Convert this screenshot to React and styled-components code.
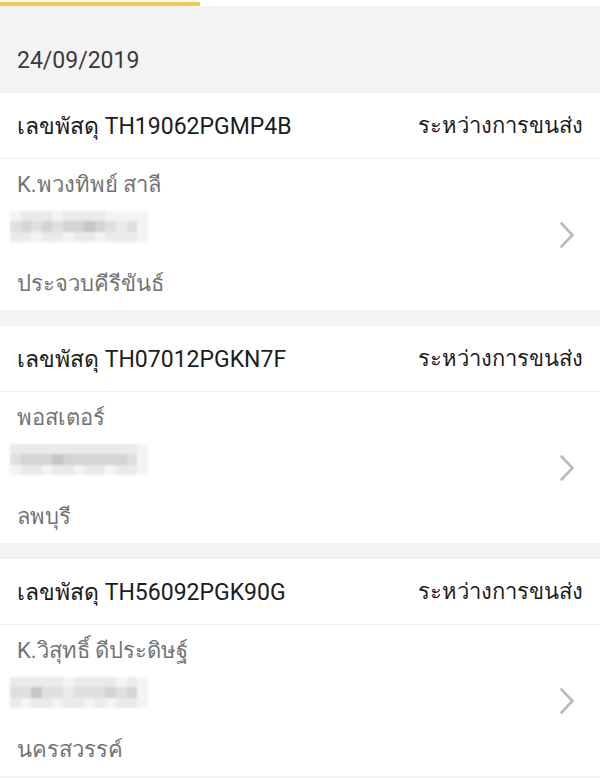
import styled, { createGlobalStyle } from "styled-components";

const GlobalStyle = createGlobalStyle`
  body {
    margin: 0;
    background: #f3f3f3;
    font-family: Roboto, "Noto Sans", "DejaVu Sans", sans-serif;
  }
`;

const parcels = [
  {
    id: "TH19062PGMP4B",
    status: "ระหว่างการขนส่ง",
    name: "K.พวงทิพย์ สาลี",
    province: "ประจวบคีรีขันธ์",
    mosaic: [
      [0, 1, 1, 1, 0, 1, 1, 1, 1, 0, 0, 0, 0],
      [2, 3, 2, 3, 2, 3, 3, 4, 3, 2, 1, 2, 0],
      [1, 1, 0, 1, 1, 0, 1, 1, 0, 1, 1, 1, 0],
    ],
  },
  {
    id: "TH07012PGKN7F",
    status: "ระหว่างการขนส่ง",
    name: "พอสเตอร์",
    province: "ลพบุรี",
    mosaic: [
      [1, 1, 1, 1, 1, 1, 1, 1, 1, 1, 1, 1, 0],
      [2, 3, 3, 3, 4, 3, 3, 3, 3, 3, 3, 2, 0],
      [0, 1, 1, 0, 1, 1, 0, 1, 1, 0, 1, 1, 0],
    ],
  },
  {
    id: "TH56092PGK90G",
    status: "ระหว่างการขนส่ง",
    name: "K.วิสุทธิ์ ดีประดิษฐ์",
    province: "นครสวรรค์",
    mosaic: [
      [1, 1, 1, 1, 1, 0, 1, 1, 1, 1, 0, 1, 0],
      [2, 2, 4, 2, 2, 1, 2, 2, 2, 3, 2, 3, 0],
      [1, 0, 1, 1, 0, 1, 1, 0, 1, 0, 1, 1, 0],
    ],
  },
];

const shades = ["#f4f4f4", "#e9e9e9", "#dedede", "#d2d2d2", "#c4c4c4"];

function Chevron() {
  return (
    <svg width="16" height="28" viewBox="0 0 16 28" fill="none">
      <path
        d="M2.5 2.5 L13.5 14 L2.5 25.5"
        stroke="#b3bbc3"
        strokeWidth="2.6"
        strokeLinecap="round"
        strokeLinejoin="round"
      />
    </svg>
  );
}

function ParcelCard({ parcel }) {
  return (
    <Card>
      <CardHeader>
        <TrackNo>เลขพัสดุ {parcel.id}</TrackNo>
        <Status>{parcel.status}</Status>
      </CardHeader>
      <CardBody>
        <Details>
          <Line>{parcel.name}</Line>
          <Mosaic>
            {parcel.mosaic.map((row, r) =>
              row.map((s, c) => <Cell key={r + "-" + c} $shade={shades[s]} />)
            )}
          </Mosaic>
          <Line>{parcel.province}</Line>
        </Details>
        <Arrow>
          <Chevron />
        </Arrow>
      </CardBody>
    </Card>
  );
}

export default function App() {
  return (
    <Page>
      <GlobalStyle />
      <TabStrip>
        <Indicator />
      </TabStrip>
      <DateHeader>24/09/2019</DateHeader>
      <List>
        {parcels.map((p) => (
          <ParcelCard key={p.id} parcel={p} />
        ))}
      </List>
    </Page>
  );
}

const Page = styled.div`
  width: 600px;
  min-height: 778px;
  background: #f3f3f3;
  overflow: hidden;
`;
const TabStrip = styled.div`
  height: 6px;
  background: #ffffff;
  display: flex;
  align-items: flex-end;
`;
const Indicator = styled.div`
  width: 200px;
  height: 4px;
  background: #f2c94f;
`;
const DateHeader = styled.div`
  padding: 40px 17px 17px;
  font-size: 23px;
  line-height: 30px;
  color: #3a3a3a;
`;
const List = styled.div`
  display: flex;
  flex-direction: column;
  gap: 16px;
`;
const Card = styled.div`
  background: #ffffff;
`;
const CardHeader = styled.div`
  height: 65px;
  padding: 0 17px;
  display: flex;
  align-items: center;
  justify-content: space-between;
  border-bottom: 1px solid #eeeeee;
  color: #1c1c1c;
`;
const TrackNo = styled.span`
  font-size: 23px;
`;
const Status = styled.span`
  font-size: 22px;
`;
const CardBody = styled.div`
  height: 151px;
  display: flex;
  align-items: center;
  padding: 0 25px 0 17px;
`;
const Details = styled.div`
  flex: 1;
  display: flex;
  flex-direction: column;
  padding-top: 11px;
  align-self: stretch;
`;
const Line = styled.div`
  font-size: 22px;
  line-height: 30px;
  height: 30px;
  color: #737373;
`;
const Mosaic = styled.div`
  display: grid;
  grid-template-columns: repeat(13, 10.6px);
  grid-auto-rows: 10.4px;
  margin: 11px 0 27px -7px;
  filter: blur(1.2px);
  opacity: 0.95;
`;
const Cell = styled.div`
  background: ${(p) => p.$shade};
`;
const Arrow = styled.div`
  display: flex;
  align-items: center;
`;
